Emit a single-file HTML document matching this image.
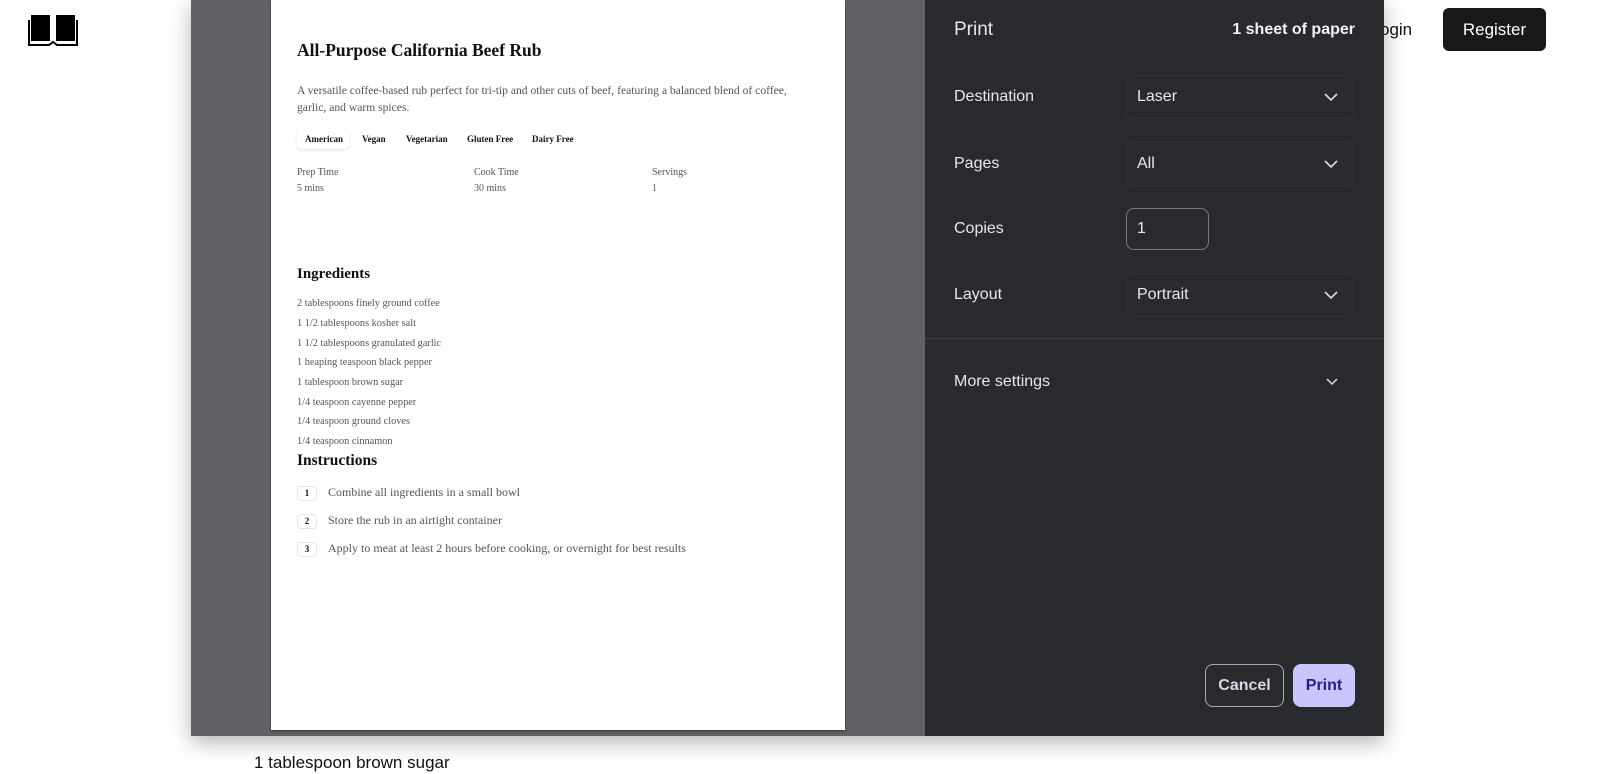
<!DOCTYPE html>
<html><head><meta charset="utf-8"><style>
*{margin:0;padding:0;box-sizing:border-box}
body{width:1600px;height:774px;overflow:hidden;background:#fff;font-family:"Liberation Sans",sans-serif;position:relative}
.abs{position:absolute}
.serif{font-family:"Liberation Serif",serif}
.dlg{left:191px;top:0;width:1193px;height:736px;box-shadow:0 6px 20px rgba(0,0,0,.3)}
.prev{left:0;top:0;width:734px;height:736px;background:#5f6166}
.paper{left:80px;top:0;width:574px;height:730px;background:#fff;box-shadow:0 1px 2px rgba(0,0,0,.5);color:#555}
.panel{left:734px;top:0;width:459px;height:736px;background:#292a2d;color:#e8e8e8;font-size:16px}
.sel{position:absolute;left:201px;width:228px;height:44px;border:1px solid #323337;border-radius:8px;padding:12px 10px;color:#e8e8e8}
.chev{position:absolute;right:14px;top:13px}
.lbl{position:absolute;left:29px}
.ing{font-size:10.3px;color:#555;position:absolute;left:26px}
.tag{position:absolute;top:134px;font-size:9px;font-weight:bold;color:#111}
.num{position:absolute;left:26px;width:20px;height:15px;border:1px solid #e5e5e5;border-radius:4px;font-size:9px;font-weight:bold;color:#111;text-align:center;line-height:13px}
.step{position:absolute;left:57px;font-size:12px;color:#555}
</style></head><body>
<svg class="abs" style="left:28px;top:12px" width="50" height="35" viewBox="0 0 50 35"><path d="M3 3h19v26H3z M28 3h19v26H28z" fill="#000"/><path d="M1 8v25h20l4-3 4 3h20V8" fill="none" stroke="#000" stroke-width="2"/></svg>
<div class="abs" style="left:1380px;top:20px;font-size:17px;color:#111">ogin</div>
<div class="abs" style="left:1443px;top:8px;width:103px;height:43px;background:#18181b;border-radius:6px;color:#fff;font-size:17px;text-align:center;line-height:43px">Register</div>
<div class="abs" style="left:254px;top:753px;font-size:17px;color:#111">1 tablespoon brown sugar</div>
<div class="abs dlg">
<div class="abs prev">
<div class="abs paper serif">
<div class="abs" style="left:26px;top:40px;font-size:17.5px;font-weight:bold;color:#111">All-Purpose California Beef Rub</div>
<div class="abs" style="left:26px;top:82px;width:500px;font-size:11.6px;line-height:17px">A versatile coffee-based rub perfect for tri-tip and other cuts of beef, featuring a balanced blend of coffee, garlic, and warm spices.</div>
<div class="abs" style="left:26px;top:129px;width:52px;height:20px;border-radius:5px;box-shadow:0 1px 3px rgba(0,0,0,.12)"></div>
<div class="tag" style="left:34px">American</div><div class="tag" style="left:91px">Vegan</div><div class="tag" style="left:135px">Vegetarian</div><div class="tag" style="left:196px">Gluten Free</div><div class="tag" style="left:261px">Dairy Free</div>
<div class="abs" style="left:26px;top:165px;font-size:10px;line-height:16px">Prep Time<br>5 mins</div>
<div class="abs" style="left:203px;top:165px;font-size:10px;line-height:16px">Cook Time<br>30 mins</div>
<div class="abs" style="left:381px;top:165px;font-size:10px;line-height:16px">Servings<br>1</div>
<div class="abs" style="left:26px;top:266px;font-size:15px;font-weight:bold;color:#111">Ingredients</div>
<div class="ing" style="top:298px">2 tablespoons finely ground coffee</div>
<div class="ing" style="top:318px">1 1/2 tablespoons kosher salt</div>
<div class="ing" style="top:338px">1 1/2 tablespoons granulated garlic</div>
<div class="ing" style="top:357px">1 heaping teaspoon black pepper</div>
<div class="ing" style="top:377px">1 tablespoon brown sugar</div>
<div class="ing" style="top:397px">1/4 teaspoon cayenne pepper</div>
<div class="ing" style="top:416px">1/4 teaspoon ground cloves</div>
<div class="ing" style="top:436px">1/4 teaspoon cinnamon</div>
<div class="abs" style="left:26px;top:452px;font-size:15.5px;font-weight:bold;color:#111">Instructions</div>
<div class="num" style="top:486px">1</div><div class="step" style="top:485px">Combine all ingredients in a small bowl</div>
<div class="num" style="top:514px">2</div><div class="step" style="top:513px">Store the rub in an airtight container</div>
<div class="num" style="top:542px">3</div><div class="step" style="top:541px">Apply to meat at least 2 hours before cooking, or overnight for best results</div>
</div></div>
<div class="abs panel">
<div class="lbl" style="top:19px;font-size:19px">Print</div>
<div class="abs" style="right:29px;top:21px;font-size:16px;font-weight:600;color:#f2f2f2">1 sheet of paper</div>
<div class="lbl" style="top:88px">Destination</div>
<div class="sel" style="top:75px">Laser<svg class="chev" width="16" height="16" viewBox="0 0 16 16"><path d="M2 5l6 6 6-6" fill="none" stroke="#ddd" stroke-width="1.6"/></svg></div>
<div class="lbl" style="top:155px">Pages</div>
<div class="sel" style="top:142px">All<svg class="chev" width="16" height="16" viewBox="0 0 16 16"><path d="M2 5l6 6 6-6" fill="none" stroke="#ddd" stroke-width="1.6"/></svg></div>
<div class="lbl" style="top:220px">Copies</div>
<div class="sel" style="top:208px;width:83px;height:42px;border-color:#7a7b80;padding:11px 10px">1</div>
<div class="lbl" style="top:286px">Layout</div>
<div class="sel" style="top:273px">Portrait<svg class="chev" width="16" height="16" viewBox="0 0 16 16"><path d="M2 5l6 6 6-6" fill="none" stroke="#ddd" stroke-width="1.6"/></svg></div>
<div class="abs" style="left:0;top:338px;width:459px;height:1px;background:#3f4044"></div>
<div class="lbl" style="top:373px">More settings</div>
<svg class="abs" style="left:399px;top:374px" width="16" height="16" viewBox="0 0 16 16"><path d="M3 5l5 5 5-5" fill="none" stroke="#ccc" stroke-width="1.6"/></svg>
<div class="abs" style="left:280px;top:664px;width:79px;height:43px;border:1px solid #a8a6c0;border-radius:8px;text-align:center;line-height:41px;font-weight:bold;color:#d8d8e8">Cancel</div>
<div class="abs" style="left:368px;top:664px;width:62px;height:43px;background:#c8c6fc;border-radius:8px;text-align:center;line-height:43px;font-weight:bold;color:#231d8c">Print</div>
</div></div>
</body></html>
